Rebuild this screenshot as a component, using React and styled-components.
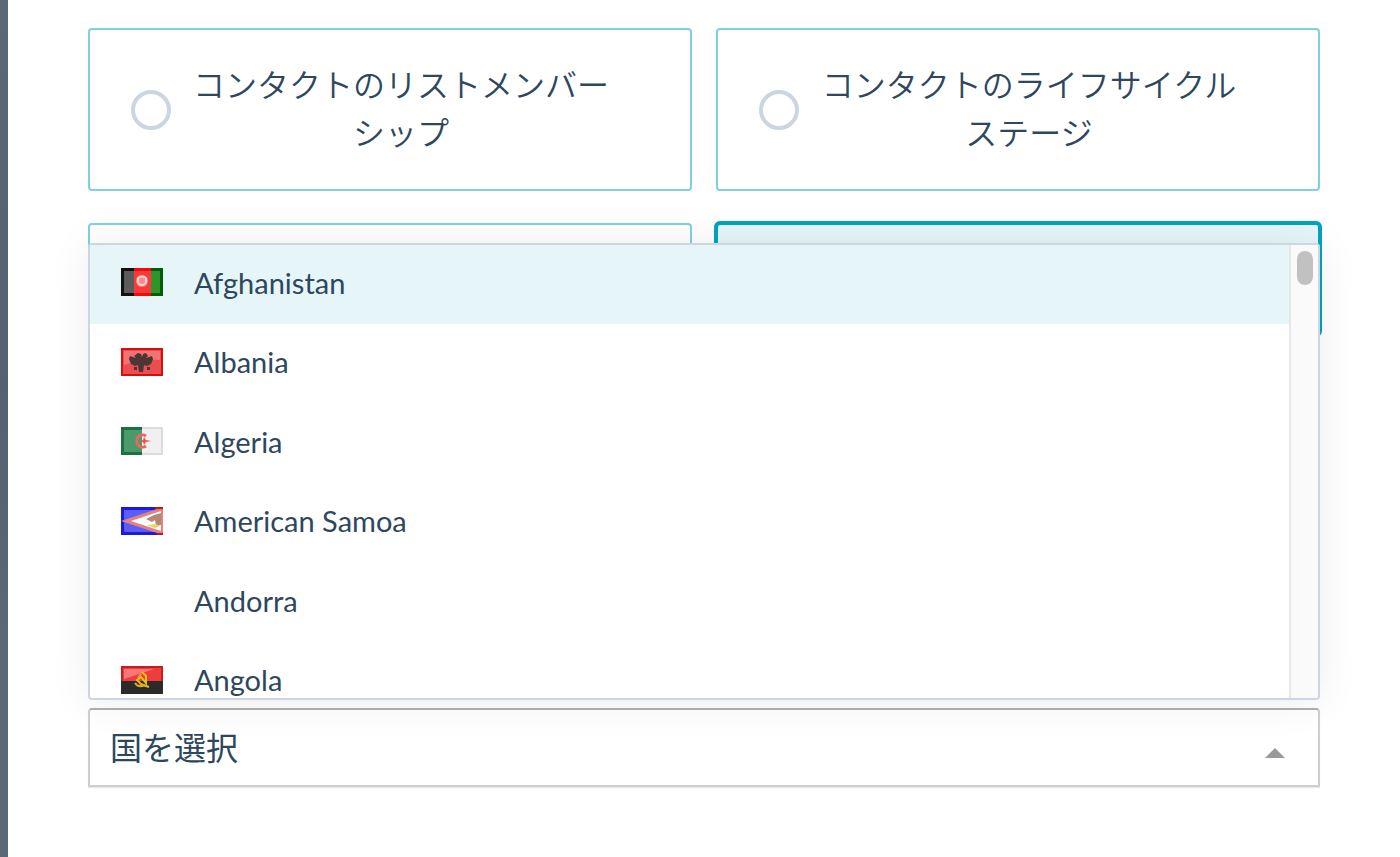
import React, { useState } from 'react';
import styled, { createGlobalStyle } from 'styled-components';

const GlobalStyle = createGlobalStyle`
    * {
        box-sizing: border-box;
    }
    body {
        margin: 0;
        background: #fff;
        color: #2e475d;
        font-family: Lato, "Noto Sans CJK JP", sans-serif;
    }
`;

const Page = styled.div`
    display: flex;
    min-height: 100vh;
`;

const Backdrop = styled.div`
    width: 8px;
    background: linear-gradient(#5b6876, #536170 45%, #5b6876 75%);
`;

const Panel = styled.main`
    flex: 1;
    padding: 28px 80px 0;
`;

const Cards = styled.div`
    display: grid;
    grid-template-columns: 1fr 1fr;
    gap: 32px 24px;
`;

const Card = styled.label`
    display: flex;
    align-items: center;
    min-height: ${props => (props.$short ? '112px' : '163px')};
    padding: 0 59px 0 41px;
    border: 2px solid ${props => (props.$selected ? '#00a4bd' : '#7fd1de')};
    border-radius: 4px;
    background: ${props => (props.$selected ? '#e5f5f8' : '#fff')};
    box-shadow: ${props => (props.$selected ? '0 0 0 2px #00a4bd' : 'none')};
`;

const Radio = styled.input`
    appearance: none;
    flex: none;
    width: 40px;
    height: 40px;
    margin: 0;
    border: 4px solid #cbd6e2;
    border-radius: 50%;
    background: #fff;
`;

const CardText = styled.span`
    flex: 1;
    padding: 0 16px 6px;
    font-size: 32px;
    font-weight: 350;
    font-family: "Noto Sans CJK JP", sans-serif;
    line-height: 48px;
    text-align: center;
`;

const Field = styled.div`
    position: relative;
    margin-top: 373px;
`;

const Select = styled.select`
    appearance: none;
    display: block;
    width: 100%;
    height: 79px;
    padding: 0 20px;
    border: 2px solid #cfcfcf;
    border-top-color: #b0b0b0;
    border-radius: 4px 4px 0 0;
    background: #fff;
    color: #2e475d;
    font-family: inherit;
    font-size: 32px;
    box-shadow: 0 1px 1px #e4e4e4;
`;

const Caret = styled.svg`
    position: absolute;
    right: 35px;
    top: 40px;
    width: 20px;
    height: 10px;
    pointer-events: none;
`;

const Menu = styled.div`
    position: absolute;
    left: 0;
    right: 0;
    bottom: calc(100% + 8px);
    display: flex;
    height: 457px;
    overflow: hidden;
    border: 2px solid #cbd6e2;
    border-radius: 4px;
    background: #fff;
    box-shadow: 0 2px 40px rgba(0, 0, 0, 0.08);
`;

const List = styled.ul`
    flex: 1;
    margin: 0;
    padding: 0;
    list-style: none;
`;

const Item = styled.li`
    height: 79px;
    &:nth-child(even) {
        height: 80px;
    }
`;

const Option = styled.button`
    display: flex;
    align-items: center;
    gap: 31px;
    width: 100%;
    height: 100%;
    padding: 0 31px 5px;
    border: 0;
    background: ${props => (props.$active ? '#e5f5f8' : 'transparent')};
    color: inherit;
    font-family: inherit;
    font-size: 29px;
    text-align: left;
`;

const FlagBox = styled.span`
    display: flex;
    width: 42px;
    height: 28px;
    svg {
        flex: none;
    }
`;

const Track = styled.div`
    width: 29px;
    padding: 6px 0 0 6px;
    border-left: 2px solid #e8e8e8;
    background: #fafafa;
`;

const Thumb = styled.div`
    width: 16px;
    height: 34px;
    border-radius: 8px;
    background: #c1c1c1;
`;

const flags = {
    Afghanistan: (
        <>
            <path fill="#5c5c5c" d="M0 0h13v28H0z" />
            <path fill="#fa3a3a" d="M13 0h17v28H13z" />
            <path fill="#2c962c" d="M30 0h12v28H30z" />
            <circle cx="21" cy="13" r="6" fill="#fb8a8a" />
            <path fill="none" stroke="#fdd0d0" strokeWidth="2" d="M17 10q-1 7 4 7t4-7q-4-3-8 0" />
            <path fill="none" stroke="#111" strokeWidth="3" d="M13 1.5H1.5v25H13" />
            <path fill="none" stroke="#ee0c0c" strokeWidth="3" d="M13 1.5h17M13 26.5h17" />
            <path fill="none" stroke="#075c07" strokeWidth="3" d="M30 1.5h10.5v25H30" />
        </>
    ),
    Albania: (
        <>
            <path fill="#ea4e4e" d="M0 0h42v28H0z" />
            <path fill="#f07474" d="M3 3h36v9Q20 11 3 17z" />
            <path fill="#4b3535" d="M17 5l3 1 1 3 1-3 3-1 2 3-2 2 6-2 1 3-2 5-4 2-3-1-1 7h-4l-1-7-3 1-4-2-2-5 1-3 6 2-2-2z" />
            <path fill="#4b3535" d="M13 19h3v3h-3zM26 19h3v3h-3z" />
            <path fill="none" stroke="#d90d0d" strokeWidth="2" d="M1 1h40v26H1z" />
        </>
    ),
    Algeria: (
        <>
            <path fill="#4b9a6b" d="M0 0h21v28H0z" />
            <path fill="#f0f0f0" d="M21 0h21v28H21z" />
            <path fill="none" stroke="#1d7040" strokeWidth="3" d="M21 1.5H1.5v25H21" />
            <path fill="none" stroke="#dcdcdc" strokeWidth="2" d="M21 1h20v26H21" />
            <path fill="none" stroke="#ec6560" strokeWidth="3" d="M25 9a6 6 0 1 0 0 10" />
            <path fill="#f0544f" d="M18 14l4-1 1-3 2 3 5 1-5 1-2 3-1-3z" />
        </>
    ),
    'American Samoa': (
        <>
            <path fill="#5c5cf8" d="M0 0h42v28H0z" />
            <path fill="none" stroke="#1b1be0" strokeWidth="3" d="M42 1.5H1.5v25H42" />
            <path fill="#e58080" d="M0 14L36 2h6v24h-6z" />
            <path fill="#fff" d="M10 14L40 4v20z" />
            <path fill="#b08a72" d="M25 12l8-4 7-2v12l-5 1-1-6-3 2z" />
            <path fill="#efd060" d="M26 18l9-1 4 2-5 2z" />
            <path fill="none" stroke="#c01818" strokeWidth="2" d="M34 1h8M36 27h6" />
        </>
    ),
    Angola: (
        <>
            <path fill="#f03c3c" d="M0 0h42v15H0z" />
            <path fill="#f77777" d="M3 3h30Q18 8 3 13z" />
            <path fill="#2b2b2b" d="M0 15h42v13H0z" />
            <path fill="none" stroke="#c22020" strokeWidth="2" d="M1 15V1h40v14" />
            <path fill="none" stroke="#e5c01c" strokeWidth="2" d="M21 6l4 4v7l-5-6-4 3 4 4q5 2 8 3" />
            <path fill="none" stroke="#d6b020" strokeWidth="2" d="M20 8l-3 4M14 17q3 5 10 2" />
        </>
    )
};

const countries = ['Afghanistan', 'Albania', 'Algeria', 'American Samoa', 'Andorra', 'Angola'];

function Flag({ name }) {
    return (
        <FlagBox>
            {flags[name] && (
                <svg width="42" height="28" viewBox="0 0 42 28" aria-hidden="true">
                    {flags[name]}
                </svg>
            )}
        </FlagBox>
    );
}

export default function App() {
    const [active, setActive] = useState('Afghanistan');

    return (
        <Page>
            <GlobalStyle />
            <Backdrop />
            <Panel>
                <Cards>
                    <Card>
                        <Radio type="radio" name="criteria" />
                        <CardText>コンタクトのリストメンバーシップ</CardText>
                    </Card>
                    <Card>
                        <Radio type="radio" name="criteria" />
                        <CardText>コンタクトのライフサイクルステージ</CardText>
                    </Card>
                    <Card $short />
                    <Card $short $selected />
                </Cards>
                <Field>
                    <Select aria-label="国を選択">
                        <option>国を選択</option>
                    </Select>
                    <Caret viewBox="0 0 20 10">
                        <path fill="#999" d="M10 0l10 10H0z" />
                    </Caret>
                    <Menu>
                        <List>
                            {countries.map(name => (
                                <Item key={name}>
                                    <Option type="button" $active={name === active} onClick={() => setActive(name)}>
                                        <Flag name={name} />
                                        {name}
                                    </Option>
                                </Item>
                            ))}
                        </List>
                        <Track>
                            <Thumb />
                        </Track>
                    </Menu>
                </Field>
            </Panel>
        </Page>
    );
}
